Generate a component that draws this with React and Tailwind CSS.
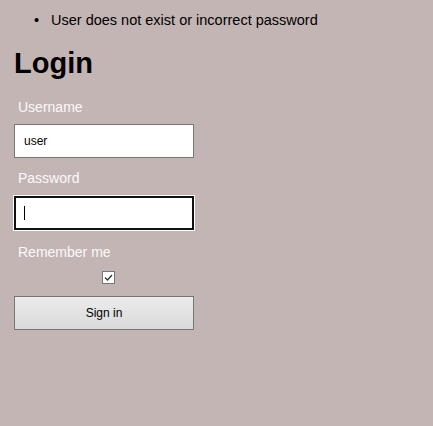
const App = () => {
    return (
        <div className="min-h-screen h-[426px] bg-[#c4b5b5] text-black font-['Liberation_Sans',Arial,sans-serif]">
            <div className="pt-3 flex pl-[34px] text-[14.5px] leading-4">
                <span className="w-[17px]">•</span>
                <span>User does not exist or incorrect password</span>
            </div>

            <div className="px-[14px]">
                <h1 className="mt-[18px] text-[29px] font-bold leading-[34px]">Login</h1>

                <form className="w-[180px]" onSubmit={(e) => e.preventDefault()}>
                    <label className="block mt-[19px] h-4 leading-4 text-[14px] pl-1 text-[#fafafa]">
                        Username
                    </label>
                    <input
                        type="text"
                        defaultValue="user"
                        className="block mt-[9px] w-full h-[34px] border border-[#767676] bg-white pl-[9px] text-[12px] outline-none"
                    />

                    <label className="block mt-3 h-4 leading-4 text-[14px] pl-1 text-[#fafafa]">
                        Password
                    </label>
                    <div className="mt-[10px] w-full h-[34px] border-2 border-[#101010] bg-white shadow-[0_0_0_1px_#ffffff] flex items-center pl-2">
                        <span className="w-px h-[14px] bg-black" />
                    </div>

                    <label className="block mt-[14px] h-4 leading-4 text-[14px] pl-1 text-[#fafafa]">
                        Remember me
                    </label>
                    <div className="mt-[11px] ml-[88px] w-[13px] h-[13px] border border-[#767676] bg-white flex items-center justify-center">
                        <svg width="11" height="11" viewBox="0 0 11 11">
                            <polyline
                                points="2,5.5 4.5,8 9,3"
                                fill="none"
                                stroke="#333333"
                                strokeWidth="1.3"
                            />
                        </svg>
                    </div>

                    <button
                        type="submit"
                        className="block mt-3 w-full h-[34px] border border-[#767676] bg-gradient-to-b from-[#ececec] to-[#d9d9d9] text-[12px] text-black"
                    >
                        Sign in
                    </button>
                </form>
            </div>
        </div>
    );
};

export default App;
